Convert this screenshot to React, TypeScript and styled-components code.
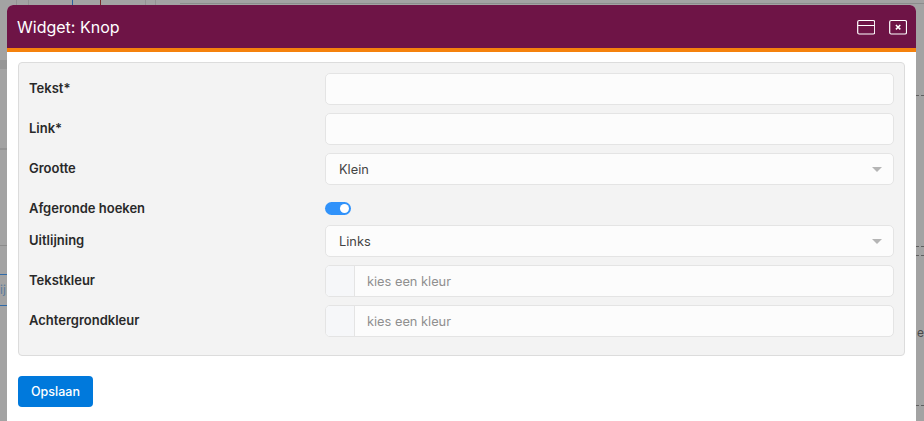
import styled, { createGlobalStyle } from "styled-components";

const GlobalStyle = createGlobalStyle`
  html, body {
    margin: 0;
    height: 100%;
    overflow: hidden;
    background: #a3a3a3;
    font-family: Inter, "Liberation Sans", sans-serif;
  }
  * {
    box-sizing: border-box;
  }
`;

const line = (color: string, x: number, y: number, w: string, h: string) =>
  `linear-gradient(${color}, ${color}) ${x}px ${y}px / ${w} ${h} no-repeat`;

const dash = (y: number) =>
  `repeating-linear-gradient(90deg, #5f5f5f 0 3px, transparent 3px 5px) 0 ${y}px / 100% 1px no-repeat`;

const Page = styled.div`
  display: grid;
  grid-template-columns: 7px 1fr 8px;
  grid-template-rows: 5px 1fr;
  width: 924px;
  height: 421px;
  overflow: hidden;
  background: #a3a3a3;
`;

// the page behind the modal only shows in these slim margins
const TopStrip = styled.div`
  grid-column: 1 / -1;
  background:
    ${line("#939393", 16, 0, "1px", "5px")},
    ${line("#939393", 28, 0, "1px", "5px")},
    ${line("#2a5f9e", 72, 0, "1px", "5px")},
    ${line("#7a2a2a", 100, 0, "1px", "5px")},
    ${line("#939393", 145, 0, "1px", "5px")},
    ${line("#939393", 155, 0, "1px", "5px")},
    ${line("#8c8c8c", 180, 3, "100%", "1px")};
`;

const LeftStrip = styled.div`
  padding-top: 278px;
  overflow: hidden;
  font-size: 12px;
  line-height: 14px;
  color: #5a7a9c;
  background:
    ${line("#969696", 0, 55, "100%", "9px")},
    ${line("#949494", 0, 143, "100%", "2px")},
    ${line("#8c8c8c", 0, 240, "100%", "1px")},
    ${line("#2f6aa8", 0, 269, "100%", "1px")},
    ${line("#2f6aa8", 0, 300, "100%", "1px")};
`;

const RightStrip = styled.div`
  padding: 321px 0 0 1px;
  overflow: hidden;
  font-size: 12px;
  line-height: 14px;
  color: #4a4a4a;
  background:
    ${dash(90)},
    ${dash(241)},
    ${dash(250)},
    ${dash(400)};
`;

const Modal = styled.div`
  background: #fff;
  border-radius: 6px 6px 0 0;
  overflow: hidden;
`;

const Header = styled.header`
  display: flex;
  align-items: center;
  justify-content: space-between;
  height: 47px;
  padding: 0 9px 0 10px;
  background: #6e1446;
  border-bottom: 4px solid #f5820d;
  color: #fff;
`;

const Title = styled.h1`
  margin: 0;
  font-size: 16px;
  font-weight: 400;
  line-height: 20px;
`;

const HeaderActions = styled.div`
  display: flex;
  align-items: center;
  gap: 14px;
`;

const IconButton = styled.button`
  display: block;
  width: 18px;
  height: 16px;
  padding: 0;
  border: 0;
  background: none;
  color: #fff;

  svg {
    display: block;
  }
`;

const Body = styled.div`
  padding: 10px 11px 0;
`;

const Panel = styled.form`
  height: 294px;
  padding: 10px 10px 0;
  background: #f3f3f3;
  border: 1px solid #dcdcdc;
  border-radius: 4px;
`;

const Row = styled.div`
  display: grid;
  grid-template-columns: 296px 1fr;
  align-items: center;
  height: 32px;
  margin-bottom: 8px;
`;

const ToggleRow = styled(Row)`
  height: 24px;
  padding-top: 7px;
`;

const Label = styled.label`
  font-size: 13px;
  font-weight: 600;
  color: #292929;
  line-height: 16px;
  margin-top: -2px;
`;

const Field = styled.div`
  display: flex;
  align-items: center;
  height: 32px;
  padding: 0 13px;
  background: #fcfcfc;
  border: 1px solid #e4e4e4;
  border-radius: 5px;
  font-size: 12.8px;
  color: #444;
`;

const SelectField = styled(Field)`
  justify-content: space-between;
  padding-right: 11px;
`;

const Caret = styled.span`
  width: 0;
  height: 0;
  border-left: 5px solid transparent;
  border-right: 5px solid transparent;
  border-top: 5px solid #b5b5b5;
`;

const ColorField = styled(Field)`
  padding: 0;
  overflow: hidden;
`;

const Swatch = styled.span`
  flex: none;
  width: 29px;
  height: 100%;
  background: #f6f7f9;
  border-right: 1px solid #e4e4e4;
`;

const Placeholder = styled.span`
  padding-left: 12px;
  color: #8f8f8f;
`;

const Toggle = styled.span`
  display: flex;
  align-items: center;
  justify-content: flex-end;
  width: 26px;
  height: 13px;
  padding-right: 2px;
  background: #3092fa;
  border-radius: 7px;

  &::after {
    content: "";
    width: 9px;
    height: 9px;
    border-radius: 50%;
    background: #fff;
  }
`;

const Footer = styled.div`
  padding: 20px 11px 0;
`;

const SaveButton = styled.button`
  display: block;
  width: 75px;
  height: 31px;
  padding: 0;
  border: 0;
  border-radius: 4px;
  background: #0079dc;
  color: #fff;
  font-family: inherit;
  font-size: 12.5px;
  font-weight: 500;
`;

const textRows = ["Tekst*", "Link*"];
const colorRows = ["Tekstkleur", "Achtergrondkleur"];

export default function App() {
  return (
    <>
      <GlobalStyle />
      <Page>
        <TopStrip />
        <LeftStrip>ij</LeftStrip>
        <Modal>
          <Header>
            <Title>Widget: Knop</Title>
            <HeaderActions>
              <IconButton type="button" aria-label="Maximaliseren">
                <svg width="18" height="16" viewBox="0 0 18 16" fill="none" stroke="currentColor" strokeWidth="1.2">
                  <rect x="0.7" y="1.5" width="17" height="13.5" rx="1.5" />
                  <path d="M0.7 6.5H17.7" />
                </svg>
              </IconButton>
              <IconButton type="button" aria-label="Sluiten">
                <svg width="18" height="16" viewBox="0 0 18 16" fill="none" stroke="currentColor">
                  <rect x="0.7" y="1.5" width="16.8" height="13.5" rx="1.5" strokeWidth="1.2" />
                  <path d="M6.9 6L11.3 10.4M11.3 6L6.9 10.4" strokeWidth="1.5" />
                </svg>
              </IconButton>
            </HeaderActions>
          </Header>
          <Body>
            <Panel>
              {textRows.map((label) => (
                <Row key={label}>
                  <Label>{label}</Label>
                  <Field />
                </Row>
              ))}
              <Row>
                <Label>Grootte</Label>
                <SelectField>
                  Klein
                  <Caret />
                </SelectField>
              </Row>
              <ToggleRow>
                <Label>Afgeronde hoeken</Label>
                <Toggle />
              </ToggleRow>
              <Row>
                <Label>Uitlijning</Label>
                <SelectField>
                  Links
                  <Caret />
                </SelectField>
              </Row>
              {colorRows.map((label) => (
                <Row key={label}>
                  <Label>{label}</Label>
                  <ColorField>
                    <Swatch />
                    <Placeholder>kies een kleur</Placeholder>
                  </ColorField>
                </Row>
              ))}
            </Panel>
          </Body>
          <Footer>
            <SaveButton type="button">Opslaan</SaveButton>
          </Footer>
        </Modal>
        <RightStrip>e</RightStrip>
      </Page>
    </>
  );
}
